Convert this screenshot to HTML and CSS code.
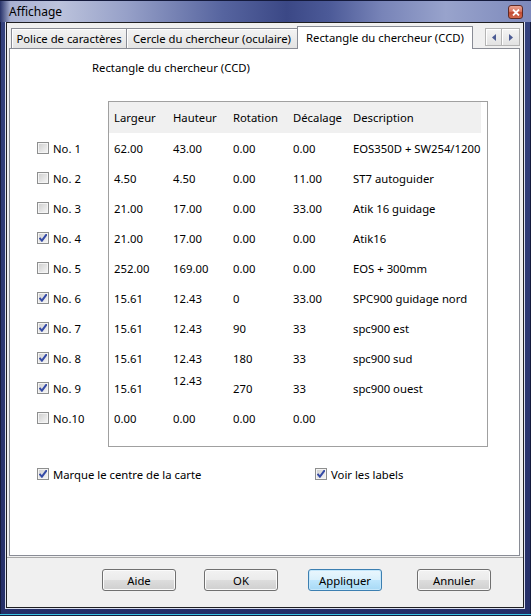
FILE: index.html
```html
<!DOCTYPE html>
<html lang="fr">
<head>
  <meta charset="UTF-8" />
  <title>Affichage</title>
  <link rel="stylesheet" href="styles.css">
</head>
<body>
<div class="window">
  <div class="titlebar">
    <span class="title">Affichage</span>
    <span class="close-btn">
      <svg width="8" height="7" viewBox="0 0 8 7"><path d="M1 0.5 L7 6.5 M7 0.5 L1 6.5" stroke="#fff" stroke-width="1.8"/></svg>
    </span>
  </div>

  <div class="frame">
    <div class="client">

      <div class="tabs">
        <div class="tab tab-font">Police de caractères</div>
        <div class="tab tab-circle">Cercle du chercheur (oculaire)</div>
        <div class="tab tab-rect active">Rectangle du chercheur (CCD)</div>
        <div class="tab-scroll">
          <span class="scroll-btn"><svg width="4" height="7" viewBox="0 0 4 7"><path d="M4 0 L0 3.5 L4 7 Z" fill="#4b5b94"/></svg></span>
          <span class="scroll-btn"><svg width="4" height="7" viewBox="0 0 4 7"><path d="M0 0 L4 3.5 L0 7 Z" fill="#4b5b94"/></svg></span>
        </div>
      </div>

      <div class="page">
        <div class="caption">Rectangle du chercheur (CCD)</div>

        <div class="rects">
          <div class="checks">
            <label class="check-row"><span class="cb"></span>No. 1</label>
            <label class="check-row"><span class="cb"></span>No. 2</label>
            <label class="check-row"><span class="cb"></span>No. 3</label>
            <label class="check-row"><span class="cb checked"></span>No. 4</label>
            <label class="check-row"><span class="cb"></span>No. 5</label>
            <label class="check-row"><span class="cb checked"></span>No. 6</label>
            <label class="check-row"><span class="cb checked"></span>No. 7</label>
            <label class="check-row"><span class="cb checked"></span>No. 8</label>
            <label class="check-row"><span class="cb checked"></span>No. 9</label>
            <label class="check-row"><span class="cb"></span>No.10</label>
          </div>

          <div class="table-box">
            <div class="row head">
              <span class="cell">Largeur</span>
              <span class="cell">Hauteur</span>
              <span class="cell">Rotation</span>
              <span class="cell">Décalage</span>
              <span class="cell">Description</span>
            </div>
            <div class="row">
              <span class="cell">62.00</span><span class="cell">43.00</span><span class="cell">0.00</span><span class="cell">0.00</span><span class="cell">EOS350D + SW254/1200</span>
            </div>
            <div class="row">
              <span class="cell">4.50</span><span class="cell">4.50</span><span class="cell">0.00</span><span class="cell">11.00</span><span class="cell">ST7 autoguider</span>
            </div>
            <div class="row">
              <span class="cell">21.00</span><span class="cell">17.00</span><span class="cell">0.00</span><span class="cell">33.00</span><span class="cell">Atik 16 guidage</span>
            </div>
            <div class="row">
              <span class="cell">21.00</span><span class="cell">17.00</span><span class="cell">0.00</span><span class="cell">0.00</span><span class="cell">Atik16</span>
            </div>
            <div class="row">
              <span class="cell">252.00</span><span class="cell">169.00</span><span class="cell">0.00</span><span class="cell">0.00</span><span class="cell">EOS + 300mm</span>
            </div>
            <div class="row">
              <span class="cell">15.61</span><span class="cell">12.43</span><span class="cell">0</span><span class="cell">33.00</span><span class="cell">SPC900 guidage nord</span>
            </div>
            <div class="row">
              <span class="cell">15.61</span><span class="cell">12.43</span><span class="cell">90</span><span class="cell">33</span><span class="cell">spc900 est</span>
            </div>
            <div class="row">
              <span class="cell">15.61</span><span class="cell">12.43</span><span class="cell">180</span><span class="cell">33</span><span class="cell">spc900 sud</span>
            </div>
            <div class="row">
              <span class="cell">15.61</span><span class="cell raised">12.43</span><span class="cell">270</span><span class="cell">33</span><span class="cell">spc900 ouest</span>
            </div>
            <div class="row">
              <span class="cell">0.00</span><span class="cell">0.00</span><span class="cell">0.00</span><span class="cell">0.00</span><span class="cell"></span>
            </div>
          </div>
        </div>

        <div class="options">
          <label class="check-row opt-center"><span class="cb checked"></span>Marque le centre de la carte</label>
          <label class="check-row"><span class="cb checked"></span>Voir les labels</label>
        </div>
      </div>

      <div class="buttons">
        <button class="btn">Aide</button>
        <button class="btn btn-ok">OK</button>
        <button class="btn btn-apply default">Appliquer</button>
        <button class="btn btn-cancel">Annuler</button>
      </div>

    </div>
  </div>
</div>
</body>
</html>
```

FILE: styles.css
```css
body {
  margin: 0;
  font-family: "Noto Sans", "Open Sans", sans-serif;
  font-size: 11.3px;
  color: #000;
}

.window {
  width: 531px;
  height: 616px;
  box-sizing: border-box;
  display: flex;
  flex-direction: column;
  background: linear-gradient(180deg, #34427e, #252f68);
  box-shadow: inset 0 -1px #141a3c, inset 0 -2px #3cc4e4, inset 1px 0 #141a3c, inset -1px 0 #141a3c;
}

/* title bar */
.titlebar {
  height: 22px;
  flex: none;
  display: flex;
  padding-left: 9px;
  background: linear-gradient(90deg, #28336a 0, #a9b1d2 2%, #bcc3dc 11%, #96a0c8 24%, #56649f 42%, #3b4886 54%, #4c5a98 62%, #7884b8 72%, #98a3cc 84%, #7d89bb 100%);
  box-shadow: inset 0 1px #141a3c;
}

.title {
  line-height: 24px;
  font-size: 12px;
}

.close-btn {
  margin: 5px 8px 0 auto;
  width: 15px;
  height: 14px;
  box-sizing: border-box;
  border: 1px solid #5e2a26;
  border-radius: 3px;
  background: linear-gradient(180deg, #eaa593 0, #d8745f 45%, #c24a32 55%, #d26a4e 100%);
  display: flex;
  align-items: center;
  justify-content: center;
}

/* client area */
.frame {
  flex: 1;
  display: flex;
  margin: 0 6px 7px 5px;
  border: 1px solid #d8ddee;
  border-top: none;
}

.client {
  flex: 1;
  display: flex;
  flex-direction: column;
  border: 1px solid #1f1f22;
  background: #f0f0f0;
}

/* tabs */
.tabs {
  height: 25px;
  flex: none;
  display: flex;
  align-items: flex-end;
  padding: 0 3px 0 4px;
}

.tab {
  box-sizing: border-box;
  height: 20px;
  padding-top: 1px;
  line-height: 18px;
  text-align: center;
  white-space: nowrap;
  border: 1px solid #898c95;
  border-bottom: none;
  margin-right: -1px;
  background: linear-gradient(180deg, #f3f3f3, #e3e3e3);
  box-shadow: inset 1px 1px #fff;
}

.tab-font { width: 116px; }
.tab-circle { width: 172px; }

.tab.active {
  width: 176px;
  height: 23px;
  padding-top: 2px;
  margin-bottom: -1px;
  background: #fff;
  box-shadow: none;
  position: relative;
  z-index: 1;
}

.tab-scroll {
  display: flex;
  align-self: flex-start;
  margin: 5px 0 0 auto;
}

.scroll-btn {
  width: 17px;
  height: 18px;
  box-sizing: border-box;
  border: 1px solid #b4b4b4;
  background: linear-gradient(180deg, #f4f4f4, #e2e2e2);
  box-shadow: inset 1px 1px #fff;
  display: flex;
  align-items: center;
  justify-content: center;
}

.scroll-btn + .scroll-btn {
  width: 18px;
  border-left: none;
}

/* tab page */
.page {
  flex: none;
  height: 508px;
  box-sizing: border-box;
  margin: 0 3px 0 2px;
  border: 1px solid #898c95;
  background: #fff;
}

.caption {
  padding: 11px 0 0 82px;
  line-height: 16px;
}

.rects {
  display: flex;
  margin-top: 25px;
}

.checks {
  width: 98px;
  box-sizing: border-box;
  padding: 32px 0 0 27px;
}

.check-row {
  display: flex;
  align-items: center;
  height: 30px;
  white-space: nowrap;
}

.cb {
  width: 12px;
  height: 12px;
  box-sizing: border-box;
  margin-right: 4px;
  border: 1px solid #8e8f8f;
  background: linear-gradient(135deg, #cdcdcd, #f7f7f7);
  box-shadow: inset 0 0 0 1px #f4f4f4;
  flex: none;
}

.cb.checked {
  background-image: url("data:image/svg+xml;utf8,<svg xmlns='http://www.w3.org/2000/svg' viewBox='0 0 10 10'><path d='M1.5 4.9 L3.9 7.6 L8.8 1.2' fill='none' stroke='%23344aa6' stroke-width='2'/></svg>"), linear-gradient(135deg, #cdcdcd, #f7f7f7);
  background-size: 100% 100%;
}

.table-box {
  width: 380px;
  box-sizing: border-box;
  border: 1px solid #a0a0a0;
  padding-bottom: 13px;
}

.row {
  display: flex;
  align-items: center;
  height: 30px;
}

.row.head {
  width: 372px;
  height: 31px;
  background: #f0f0f0;
}

.cell {
  width: 60px;
  box-sizing: border-box;
  padding-left: 5px;
  white-space: nowrap;
}

.cell:first-child { width: 59px; }
.cell:last-child { width: auto; }

.cell.raised {
  align-self: flex-start;
  line-height: 16px;
}

.options {
  display: flex;
  margin-top: 19px;
  padding-left: 27px;
}

.options .check-row {
  height: 16px;
}

.opt-center {
  width: 278px;
}

/* dialog buttons */
.buttons {
  display: flex;
  margin-top: 1px;
  border-top: 1px solid #a9a9a9;
  padding: 11px 0 0 95px;
}

.btn {
  width: 74px;
  height: 22px;
  box-sizing: border-box;
  padding: 0;
  font: inherit;
  color: #000;
  border: 1px solid #707070;
  border-radius: 3px;
  background: linear-gradient(180deg, #f2f2f2 0, #ebebeb 50%, #dddddd 51%, #cfcfcf 100%);
  box-shadow: inset 0 0 0 1px #fbfbfb;
}

.btn-ok { margin-left: 28px; }
.btn-apply { margin-left: 30px; }
.btn-cancel { margin-left: 35px; }

.btn.default {
  border-color: #3c7fb1;
  background: linear-gradient(180deg, #eaf6fd 0, #d9f0fc 50%, #bee6fd 51%, #a7d9f5 100%);
  box-shadow: inset 0 0 0 1px #c4e7fb;
}
```
